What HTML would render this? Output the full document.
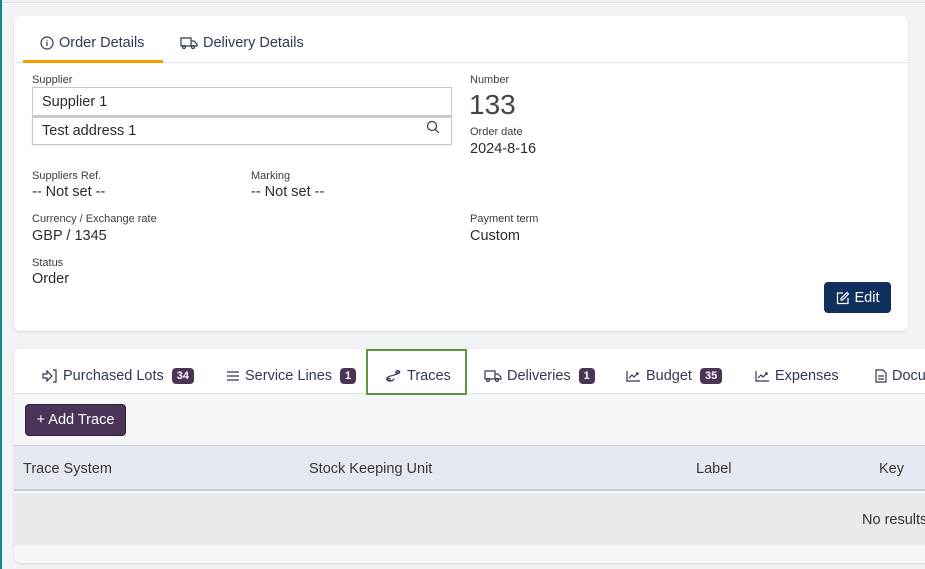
<!DOCTYPE html>
<html><head><style>
*{box-sizing:border-box;margin:0;padding:0}
body{width:925px;height:569px;overflow:hidden;background:#f2f3f5;font-family:"Liberation Sans",sans-serif;position:relative;color:#2a2a33}
.abs{position:absolute}
.lbl{font-size:11px;color:#3a3a44}
.val{font-size:14.5px;color:#2a2a33}
.tab{position:absolute;font-size:14.5px;color:#2d3a55;display:flex;align-items:center;gap:5px;white-space:nowrap}
.badge{background:#4a3558;color:#fff;font-size:11px;font-weight:bold;border-radius:4px;padding:2px 5px;margin-left:3px}
svg{stroke:#2d3a55;fill:none;stroke-width:1.2}
</style></head><body>
<div class="abs" style="left:0;top:0;width:2px;height:569px;background:#0f8a8a"></div>
<div class="abs" style="left:2px;top:2px;width:923px;height:1px;background:#dcdde0"></div>

<div class="abs" style="left:14px;top:16px;width:894px;height:315px;background:#fff;border-radius:6px;box-shadow:0 1px 2px rgba(0,0,0,.12)">
 <div class="abs" style="left:0;top:46px;width:894px;height:1px;background:#e2e2e2"></div>
 <div class="abs" style="left:9px;top:44px;width:140px;height:3px;background:#f5a000"></div>
 <div class="tab" style="left:26px;top:19px"><svg width="14" height="14" viewBox="0 0 14 14"><circle cx="7" cy="7" r="6"/><path d="M7 6v4M7 3.8v1"/></svg>Order Details</div>
 <div class="tab" style="left:166px;top:19px"><svg width="18" height="14" viewBox="0 0 18 14"><path d="M1 2h10v8H1zM11 5h3l3 3v2h-6"/><circle cx="4" cy="11" r="1.5"/><circle cx="13" cy="11" r="1.5"/></svg>Delivery Details</div>

 <div class="abs lbl" style="left:18px;top:58px">Supplier</div>
 <div class="abs" style="left:18px;top:71px;width:420px;height:29px;border:1px solid #c9c9cc;font-size:14.5px;padding:6px 9px">Supplier 1</div>
 <div class="abs" style="left:18px;top:100px;width:420px;height:29px;border:1px solid #c9c9cc;border-top:2px solid #c9c9cc;font-size:14.5px;padding:5px 9px;box-shadow:0 1px 2px rgba(0,0,0,.1)">Test address 1</div>
 <svg class="abs" style="left:412px;top:104px" width="14" height="14" viewBox="0 0 14 14"><circle cx="6" cy="6" r="4.5"/><path d="M9.3 9.3L13 13"/></svg>

 <div class="abs lbl" style="left:456px;top:58px">Number</div>
 <div class="abs" style="left:455px;top:73px;font-size:28px;color:#4a4048">133</div>
 <div class="abs lbl" style="left:456px;top:110px">Order date</div>
 <div class="abs val" style="left:456px;top:125px">2024-8-16</div>

 <div class="abs lbl" style="left:18px;top:154px">Suppliers Ref.</div>
 <div class="abs val" style="left:18px;top:168px">-- Not set --</div>
 <div class="abs lbl" style="left:237px;top:154px">Marking</div>
 <div class="abs val" style="left:237px;top:168px">-- Not set --</div>

 <div class="abs lbl" style="left:18px;top:197px">Currency / Exchange rate</div>
 <div class="abs val" style="left:18px;top:212px">GBP / 1345</div>
 <div class="abs lbl" style="left:456px;top:197px">Payment term</div>
 <div class="abs val" style="left:456px;top:212px">Custom</div>

 <div class="abs lbl" style="left:18px;top:241px">Status</div>
 <div class="abs val" style="left:18px;top:255px">Order</div>

 <div class="abs" style="left:810px;top:266px;width:67px;height:31px;background:#12305e;border-radius:4px;color:#fff;font-size:14.5px;display:flex;align-items:center;justify-content:center;gap:5px"><svg width="14" height="14" viewBox="0 0 14 14" style="stroke:#fff"><path d="M7 2H1.5v10.5H12V7"/><path d="M11 1.5l1.5 1.5-6 6H5V7.5z"/></svg>Edit</div>
</div>

<div class="abs" style="left:14px;top:349px;width:920px;height:214px;background:#f5f6f8;border-radius:6px;box-shadow:0 1px 2px rgba(0,0,0,.12);overflow:hidden">
 <div class="abs" style="left:0;top:0;width:920px;height:45px;background:#fff;border-bottom:1px solid #e0e0e0"></div>
 <div class="tab" style="left:28px;top:19px"><svg width="16" height="14" viewBox="0 0 16 14"><path d="M1 5h4V2l5 5-5 5V9H1zM11 1h3v12h-3"/></svg>Purchased Lots<span class="badge">34</span></div>
 <div class="tab" style="left:212px;top:19px"><svg width="14" height="12" viewBox="0 0 14 12"><path d="M1 2h12M1 6h12M1 10h12"/></svg>Service Lines<span class="badge">1</span></div>
 <div class="abs" style="left:352px;top:0;width:101px;height:46px;border:2px solid #5a9a3a"></div>
 <div class="tab" style="left:371px;top:19px"><svg width="17" height="14" viewBox="0 0 17 14"><path d="M12 1.5c2 0 3 1 2.5 2.2S11 5 9 6 3 7 2 9s1 3 3 3 4-1 4-2.5"/><circle cx="12" cy="3" r="1.2"/><circle cx="4" cy="10.5" r="1.2"/></svg>Traces</div>
 <div class="tab" style="left:470px;top:19px"><svg width="18" height="14" viewBox="0 0 18 14"><path d="M1 2h10v8H1zM11 5h3l3 3v2h-6"/><circle cx="4" cy="11" r="1.5"/><circle cx="13" cy="11" r="1.5"/></svg>Deliveries<span class="badge">1</span></div>
 <div class="tab" style="left:612px;top:19px"><svg width="15" height="12" viewBox="0 0 15 12"><path d="M1 1v10h13M3 8l3-3 2 2 4-4M10 3h2v2"/></svg>Budget<span class="badge">35</span></div>
 <div class="tab" style="left:741px;top:19px"><svg width="15" height="12" viewBox="0 0 15 12"><path d="M1 1v10h13M3 8l3-3 2 2 4-4M10 3h2v2"/></svg>Expenses</div>
 <div class="tab" style="left:861px;top:19px"><svg width="12" height="14" viewBox="0 0 12 14"><path d="M1 1h7l3 3v9H1zM3 7h6M3 10h6"/></svg>Documents</div>

 <div class="abs" style="left:11px;top:55px;width:101px;height:32px;background:#4a3558;border:1px solid #2a1f33;border-radius:4px;color:#fff;font-size:14.5px;display:flex;align-items:center;justify-content:center">+ Add Trace</div>

 <div class="abs" style="left:0;top:96px;width:920px;height:46px;background:#e4e8f0;border-top:1px solid #d0d3d8;border-bottom:2px solid #c8cace"></div>
 <div class="abs" style="left:9px;top:112px;font-size:14.5px;color:#3d3530">Trace System</div>
 <div class="abs" style="left:295px;top:112px;font-size:14.5px;color:#3d3530">Stock Keeping Unit</div>
 <div class="abs" style="left:682px;top:112px;font-size:14.5px;color:#3d3530">Label</div>
 <div class="abs" style="left:865px;top:112px;font-size:14.5px;color:#3d3530">Key</div>
 <div class="abs" style="left:0;top:144px;width:920px;height:52px;background:#e9eaec"></div>
 <div class="abs" style="left:848px;top:163px;font-size:14.5px;color:#333">No results</div>
</div>
</body></html>
